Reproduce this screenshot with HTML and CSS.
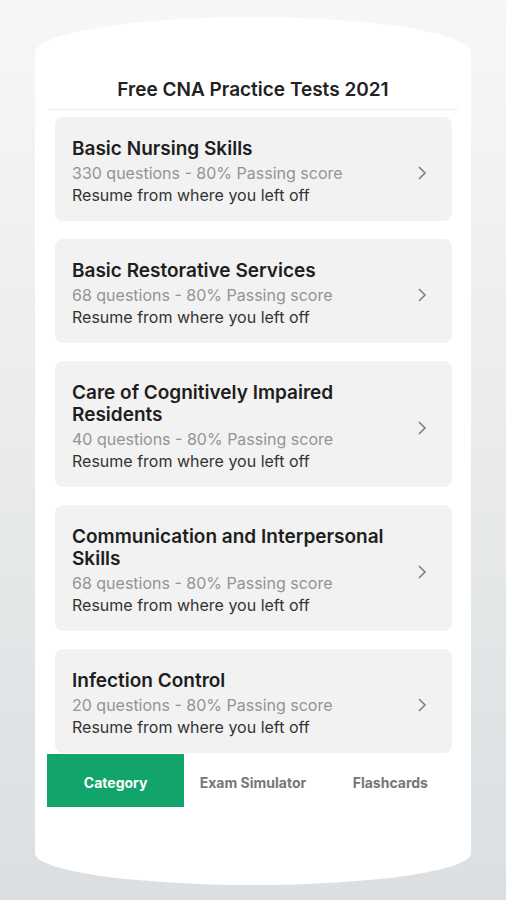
FILE: index.html
```html
<html>
  <head>
    <title>Free CNA Practice Tests 2021</title>
    <link rel="stylesheet" href="styles.css">
  </head>
  <body>
    <div class="phone">
      <div class="header">Free CNA Practice Tests 2021</div>

      <div class="list">
        <div class="card">
          <div class="info">
            <div class="name">Basic Nursing Skills</div>
            <div class="meta">330 questions - 80% Passing score</div>
            <div class="resume">Resume from where you left off</div>
          </div>
          <svg class="chev" width="10" height="16" viewBox="0 0 10 16"><path d="M2 2 L8 8 L2 14" /></svg>
        </div>
        <div class="card">
          <div class="info">
            <div class="name">Basic Restorative Services</div>
            <div class="meta">68 questions - 80% Passing score</div>
            <div class="resume">Resume from where you left off</div>
          </div>
          <svg class="chev" width="10" height="16" viewBox="0 0 10 16"><path d="M2 2 L8 8 L2 14" /></svg>
        </div>
        <div class="card">
          <div class="info">
            <div class="name">Care of Cognitively Impaired Residents</div>
            <div class="meta">40 questions - 80% Passing score</div>
            <div class="resume">Resume from where you left off</div>
          </div>
          <svg class="chev" width="10" height="16" viewBox="0 0 10 16"><path d="M2 2 L8 8 L2 14" /></svg>
        </div>
        <div class="card">
          <div class="info">
            <div class="name">Communication and Interpersonal Skills</div>
            <div class="meta">68 questions - 80% Passing score</div>
            <div class="resume">Resume from where you left off</div>
          </div>
          <svg class="chev" width="10" height="16" viewBox="0 0 10 16"><path d="M2 2 L8 8 L2 14" /></svg>
        </div>
        <div class="card">
          <div class="info">
            <div class="name">Infection Control</div>
            <div class="meta">20 questions - 80% Passing score</div>
            <div class="resume">Resume from where you left off</div>
          </div>
          <svg class="chev" width="10" height="16" viewBox="0 0 10 16"><path d="M2 2 L8 8 L2 14" /></svg>
        </div>
      </div>

      <div class="tabs">
        <div class="tab active">Category</div>
        <div class="tab">Exam Simulator</div>
        <div class="tab">Flashcards</div>
      </div>
    </div>
  </body>
</html>
```

FILE: styles.css
```css
body {
  margin: 0;
  height: 900px;
  overflow: hidden;
  background: linear-gradient(#f7f7f7, #dbdfe1);
  font-family: Inter, "Liberation Sans", sans-serif;
}
.phone {
  box-sizing: border-box;
  margin: 17px 0 0 35px;
  width: 436px;
  height: 868px;
  padding-top: 61px;
  background: #fff;
  border-radius: 50% 50% 50% 50% / 36px 36px 32px 32px;
}
.header {
  margin: 0 13px;
  padding-bottom: 7px;
  border-bottom: 1px solid #ededed;
  text-align: center;
  font-size: 19px;
  line-height: 24px;
  font-weight: 600;
  color: #222;
}
.list {
  display: flex;
  flex-direction: column;
  gap: 18px;
  padding: 7px 19px 0 20px;
}
.card {
  display: flex;
  align-items: center;
  padding: 21px 25px 15px 17px;
  background: #f2f2f2;
  border-radius: 8px;
}
.info {
  flex: 1;
  margin-right: 12px;
  font-size: 16px;
  line-height: 22px;
}
.name {
  margin-bottom: 2px;
  font-size: 19px;
  font-weight: 600;
  color: #1e1e1e;
}
.meta {
  color: #949494;
}
.resume {
  color: #333;
}
.chev {
  margin-top: 2px;
}
.chev path {
  fill: none;
  stroke: #808080;
  stroke-width: 1.6;
}
.tabs {
  display: flex;
  margin: 1px 12px 0;
}
.tab {
  flex: 1;
  height: 48px;
  padding-top: 5px;
  line-height: 48px;
  text-align: center;
  font-size: 14px;
  font-weight: 700;
  color: #777;
}
.tab.active {
  background: #12a56b;
  color: #fff;
}
```
